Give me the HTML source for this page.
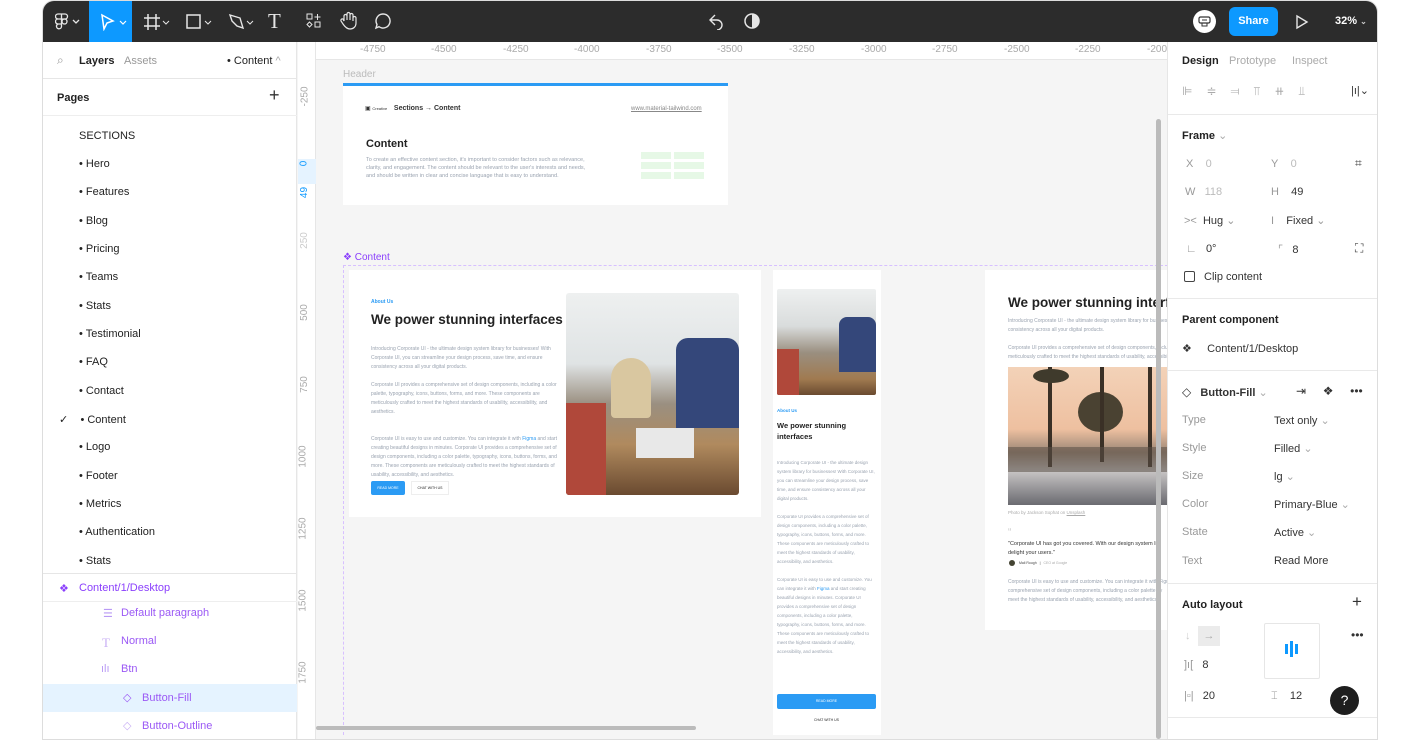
<!DOCTYPE html>
<html><head><meta charset="utf-8"><style>
*{margin:0;padding:0;box-sizing:border-box}
body{width:1419px;height:729px;background:#fff;font-family:"Liberation Sans",sans-serif;position:relative;overflow:hidden;color:#222}
.a{position:absolute}
.win{left:42px;top:0;width:1336px;height:740px;border-radius:12px 12px 0 0;overflow:hidden;background:#f5f5f5;border:1px solid #ddd}
.tb{left:0;top:0;width:1336px;height:41px;background:#2c2c2c}
.ic{color:#e6e6e6;font-size:18px}
.lp{left:0;top:41px;width:254px;height:700px;background:#fff;border-right:1px solid #e6e6e6}
.rp{left:1124px;top:41px;width:212px;height:700px;background:#fff;border-left:1px solid #e6e6e6}
.t12{font-size:11px}
.pg{position:absolute;left:36px;font-size:11px;color:#222}
.lbl{font-size:11px;color:#999}
.val{font-size:11px;color:#333}
.sep{position:absolute;left:0;width:212px;height:1px;background:#e9e9e9}
.rl{font-size:10px;color:#aaa;position:absolute}
.g{color:#9aa3b0;font-size:5px;line-height:9px}
</style></head><body>
<div class="a win">
 <div class="a tb">
  <svg class="a" style="left:12px;top:12px" width="28" height="18"><g fill="none" stroke="#e6e6e6" stroke-width="1.3"><path d="M3 1h3.5v5H3a2.5 2.5 0 010-5zM6.5 1H10a2.5 2.5 0 010 5H6.5zM3 6h3.5v5H3a2.5 2.5 0 010-5zM6.5 11v2.5A2.5 2.5 0 113 11z"/><circle cx="9.5" cy="8.5" r="2.5"/><path d="M18 7l3 3 3-3"/></g></svg>
  <div class="a" style="left:46px;top:0;width:43px;height:41px;background:#0d99ff"></div>
  <svg class="a" style="left:56px;top:12px" width="30" height="18"><path d="M3 2 L14 8 L8 10 L5 16 Z" fill="none" stroke="#fff" stroke-width="1.5"/><path d="M21 8 l3 3 3-3" fill="none" stroke="#fff" stroke-width="1.2"/></svg>
  <svg class="a" style="left:100px;top:11px" width="30" height="20"><path d="M5 2v16M13 2v16M1 6h16M1 14h16" stroke="#e6e6e6" stroke-width="1.5"/><path d="M20 9l3 3 3-3" fill="none" stroke="#e6e6e6"/></svg>
  <svg class="a" style="left:142px;top:11px" width="30" height="20"><rect x="2" y="3" width="13" height="13" fill="none" stroke="#e6e6e6" stroke-width="1.5"/><path d="M20 9l3 3 3-3" fill="none" stroke="#e6e6e6"/></svg>
  <svg class="a" style="left:184px;top:11px" width="30" height="20"><path d="M3 3l10 3 3 10-6-2-5-5z" fill="none" stroke="#e6e6e6" stroke-width="1.4"/><path d="M20 9l3 3 3-3" fill="none" stroke="#e6e6e6"/></svg>
  <div class="a ic" style="left:225px;top:8px;font-family:'Liberation Serif',serif;font-size:21px">T</div>
  <svg class="a" style="left:262px;top:11px" width="18" height="18"><rect x="2" y="2" width="5" height="5" fill="none" stroke="#e6e6e6"/><rect x="10" y="10" width="5" height="5" fill="none" stroke="#e6e6e6"/><path d="M4.5 10l2.5 2.5-2.5 2.5-2.5-2.5z M12.5 2v6M9.5 5h6" fill="none" stroke="#e6e6e6"/></svg>
  <svg class="a" style="left:296px;top:10px" width="20" height="20"><path d="M5 10V5a1.5 1.5 0 013 0v4V3a1.5 1.5 0 013 0v6V4a1.5 1.5 0 013 0v6-3a1.5 1.5 0 013 0v5c0 4-3 6-6 6s-5-2-7-5l-2-3a1.5 1.5 0 012-2z" fill="none" stroke="#e6e6e6" stroke-width="1.2"/></svg>
  <svg class="a" style="left:331px;top:11px" width="18" height="18"><path d="M9 2a7 7 0 11-4 12.7L2 16l1-3.5A7 7 0 019 2z" fill="none" stroke="#e6e6e6" stroke-width="1.4"/></svg>
  <svg class="a" style="left:664px;top:11px" width="18" height="18"><path d="M8 3L3 8l5 5M3 8h7a5 5 0 010 10" fill="none" stroke="#e6e6e6" stroke-width="1.4"/></svg>
  <svg class="a" style="left:700px;top:11px" width="18" height="18"><circle cx="9" cy="9" r="7" fill="none" stroke="#e6e6e6" stroke-width="1.5"/><path d="M9 2a7 7 0 010 14z" fill="#e6e6e6"/></svg>
  <div class="a" style="left:1150px;top:9px;width:23px;height:23px;border-radius:50%;background:#fff"></div>
  <svg class="a" style="left:1154px;top:13px" width="15" height="15"><rect x="2" y="3" width="11" height="6" rx="1.5" fill="none" stroke="#333" stroke-width="1.2"/><path d="M5 9v3h5V9M5 6h5" fill="none" stroke="#333"/></svg>
  <div class="a" style="left:1186px;top:6px;width:49px;height:29px;border-radius:6px;background:#0d99ff;color:#fff;font-size:11px;font-weight:bold;text-align:center;line-height:29px">Share</div>
  <svg class="a" style="left:1252px;top:13px" width="14" height="16"><path d="M2 2l10 6-10 6z" fill="none" stroke="#e6e6e6" stroke-width="1.4"/></svg>
  <div class="a" style="left:1292px;top:14px;color:#fff;font-size:11px;font-weight:bold">32% <span style="font-size:8px;color:#ccc">⌄</span></div>
 </div>
 <div class="a lp">
  <div class="a" style="left:14px;top:11px;color:#999;font-size:12px">⌕</div>
  <div class="a t12" style="left:36px;top:13px;font-weight:bold">Layers</div>
  <div class="a t12" style="left:81px;top:13px;color:#999">Assets</div>
  <div class="a t12" style="left:184px;top:13px">• Content <span style="color:#aaa">^</span></div>
  <div class="a" style="left:0;top:36px;width:254px;height:1px;background:#e6e6e6"></div>
  <div class="a t12" style="left:14px;top:50px;font-weight:bold">Pages</div>
  <div class="a" style="left:226px;top:43px;font-size:18px;color:#333">+</div>
  <div class="a" style="left:0;top:73px;width:254px;height:1px;background:#eee"></div>
  <div class="pg" style="top:88px">SECTIONS</div>
  <div class="pg" style="top:116px">• Hero</div>
  <div class="pg" style="top:144px">• Features</div>
  <div class="pg" style="top:173px">• Blog</div>
  <div class="pg" style="top:201px">• Pricing</div>
  <div class="pg" style="top:229px">• Teams</div>
  <div class="pg" style="top:258px">• Stats</div>
  <div class="pg" style="top:286px">• Testimonial</div>
  <div class="pg" style="top:314px">• FAQ</div>
  <div class="pg" style="top:343px">• Contact</div>
  <div class="pg" style="top:371px;left:16px">✓&nbsp;&nbsp;&nbsp;&nbsp;• Content</div>
  <div class="pg" style="top:399px">• Logo</div>
  <div class="pg" style="top:428px">• Footer</div>
  <div class="pg" style="top:456px">• Metrics</div>
  <div class="pg" style="top:484px">• Authentication</div>
  <div class="pg" style="top:513px">• Stats</div>
  <div class="a" style="left:0;top:531px;width:254px;height:1px;background:#e6e6e6"></div>
  <div class="a t12" style="left:16px;top:540px;color:#8a3ffc;font-size:11px">❖</div>
  <div class="a t12" style="left:36px;top:540px;color:#8a3ffc">Content/1/Desktop</div>
  <div class="a" style="left:0;top:559px;width:254px;height:1px;background:#eee"></div>
  <div class="a t12" style="left:60px;top:565px;color:#b99af5">☰</div>
  <div class="a t12" style="left:78px;top:565px;color:#9b59f5">Default paragraph</div>
  <div class="a t12" style="left:59px;top:593px;color:#c9b0f5;font-family:'Liberation Serif',serif;font-size:13px">T</div>
  <div class="a t12" style="left:78px;top:593px;color:#9b59f5">Normal</div>
  <div class="a t12" style="left:58px;top:621px;color:#b99af5">ılı</div>
  <div class="a t12" style="left:78px;top:621px;color:#9b59f5">Btn</div>
  <div class="a" style="left:0;top:642px;width:254px;height:28px;background:#e5f3ff"></div>
  <div class="a t12" style="left:80px;top:649px;color:#9b59f5">◇</div>
  <div class="a t12" style="left:99px;top:650px;color:#9b59f5">Button-Fill</div>
  <div class="a t12" style="left:80px;top:677px;color:#c9b0f5">◇</div>
  <div class="a t12" style="left:99px;top:678px;color:#9b59f5">Button-Outline</div>
 </div>
 <!-- rulers -->
 <div class="a" style="left:255px;top:41px;width:869px;height:18px;background:#fff;border-bottom:1px solid #e6e6e6"></div>
 <div class="a" style="left:255px;top:41px;width:18px;height:700px;background:#fff;border-right:1px solid #e6e6e6"></div>
 <div class="rl" style="left:317px;top:43px">-4750</div><div class="rl" style="left:388px;top:43px">-4500</div><div class="rl" style="left:460px;top:43px">-4250</div><div class="rl" style="left:531px;top:43px">-4000</div><div class="rl" style="left:603px;top:43px">-3750</div><div class="rl" style="left:674px;top:43px">-3500</div><div class="rl" style="left:746px;top:43px">-3250</div><div class="rl" style="left:818px;top:43px">-3000</div><div class="rl" style="left:889px;top:43px">-2750</div><div class="rl" style="left:961px;top:43px">-2500</div><div class="rl" style="left:1032px;top:43px">-2250</div><div class="rl" style="left:1104px;top:43px">-200</div>
 <div class="a" style="left:255px;top:158px;width:18px;height:25px;background:#e5f3ff"></div>
 <div class="rl" style="left:252px;top:90px;transform:rotate(-90deg)">-250</div>
 <div class="rl" style="left:258px;top:157px;transform:rotate(-90deg);color:#0d99ff">0</div>
 <div class="rl" style="left:256px;top:186px;transform:rotate(-90deg);color:#0d99ff">49</div>
 <div class="rl" style="left:253px;top:234px;transform:rotate(-90deg);color:#ccc">250</div>
 <div class="rl" style="left:253px;top:306px;transform:rotate(-90deg)">500</div>
 <div class="rl" style="left:253px;top:378px;transform:rotate(-90deg)">750</div>
 <div class="rl" style="left:249px;top:450px;transform:rotate(-90deg)">1000</div>
 <div class="rl" style="left:249px;top:522px;transform:rotate(-90deg)">1250</div>
 <div class="rl" style="left:249px;top:594px;transform:rotate(-90deg)">1500</div>
 <div class="rl" style="left:249px;top:666px;transform:rotate(-90deg)">1750</div>
 <!-- canvas -->
 <div class="a" style="left:300px;top:68px;font-size:10px;color:#bbb">Header</div>
 <div class="a" style="left:300px;top:82px;width:385px;height:3px;background:#2b9bf4"></div>
 <div class="a" style="left:300px;top:85px;width:385px;height:119px;background:#fff">
  <div class="a" style="left:22px;top:19px;font-size:6px;color:#333">▣ <span style="font-size:4px">Creative</span>&nbsp;&nbsp;&nbsp; <b style="font-size:7px">Sections → Content</b></div>
  <div class="a" style="left:288px;top:20px;font-size:6px;color:#888;text-decoration:underline">www.material-tailwind.com</div>
  <div class="a" style="left:23px;top:52px;font-size:11px;font-weight:bold">Content</div>
  <div class="a g" style="left:23px;top:70px;width:225px;font-size:5.5px;line-height:8px">To create an effective content section, it's important to consider factors such as relevance, clarity, and engagement. The content should be relevant to the user's interests and needs, and should be written in clear and concise language that is easy to understand.</div>
  <div class="a" style="left:298px;top:66px;width:30px;height:7px;background:#e6f8e6"></div><div class="a" style="left:331px;top:66px;width:30px;height:7px;background:#e6f8e6"></div>
  <div class="a" style="left:298px;top:76px;width:30px;height:7px;background:#e6f8e6"></div><div class="a" style="left:331px;top:76px;width:30px;height:7px;background:#e6f8e6"></div>
  <div class="a" style="left:298px;top:86px;width:30px;height:7px;background:#e6f8e6"></div><div class="a" style="left:331px;top:86px;width:30px;height:7px;background:#e6f8e6"></div>
 </div>
 <div class="a" style="left:300px;top:251px;font-size:10px;color:#8a3ffc">❖ Content</div>
 <div class="a" style="left:300px;top:264px;width:830px;height:470px;border:1px dashed #d7c0ff;border-right:none;border-bottom:none"></div>
 <div class="a" style="left:306px;top:269px;width:412px;height:247px;background:#fff">
  <div class="a" style="left:22px;top:29px;font-size:5px;color:#2b9bf4;font-weight:bold">About Us</div>
  <div class="a" style="left:22px;top:42px;font-size:13.5px;font-weight:bold;color:#222">We power stunning interfaces</div>
  <div class="a g" style="left:22px;top:75px;width:190px">Introducing Corporate UI - the ultimate design system library for businesses! With Corporate UI, you can streamline your design process, save time, and ensure consistency across all your digital products.<br><br style="line-height:4px">Corporate UI provides a comprehensive set of design components, including a color palette, typography, icons, buttons, forms, and more. These components are meticulously crafted to meet the highest standards of usability, accessibility, and aesthetics.<br><br><br>Corporate UI is easy to use and customize. You can integrate it with <span style="color:#2b9bf4">Figma</span> and start creating beautiful designs in minutes. Corporate UI provides a comprehensive set of design components, including a color palette, typography, icons, buttons, forms, and more. These components are meticulously crafted to meet the highest standards of usability, accessibility, and aesthetics.</div>
  <div class="a" style="left:22px;top:211px;width:34px;height:14px;background:#2b9bf4;border-radius:2px;color:#fff;font-size:3.5px;text-align:center;line-height:14px">READ MORE</div>
  <div class="a" style="left:62px;top:211px;width:38px;height:14px;background:#fff;border:1px solid #eee;font-size:3.5px;text-align:center;line-height:12px">CHAT WITH US</div>
  <div class="a" style="left:217px;top:23px;width:173px;height:202px;border-radius:3px;overflow:hidden;background:linear-gradient(180deg,#eef0f0 0%,#dfe3e4 35%,#9a8f80 55%,#b08a5e 75%,#6a4a30 100%)">
   <div class="a" style="left:0;top:110px;width:40px;height:92px;background:#b0483a"></div>
   <div class="a" style="left:110px;top:45px;width:63px;height:90px;background:#34477a;border-radius:12px 12px 0 0"></div>
   <div class="a" style="left:45px;top:65px;width:40px;height:60px;background:#d9c7a0;border-radius:20px 20px 4px 4px"></div>
   <div class="a" style="left:70px;top:135px;width:58px;height:30px;background:#e8e8e8"></div>
  </div>
 </div>
 <div class="a" style="left:730px;top:269px;width:108px;height:465px;background:#fff">
  <div class="a" style="left:4px;top:19px;width:99px;height:106px;border-radius:2px;overflow:hidden;background:linear-gradient(180deg,#eef0f0 0%,#d9dcdc 35%,#9a8f80 60%,#a07a50 85%,#6a4a30 100%)">
   <div class="a" style="left:0;top:60px;width:22px;height:46px;background:#b0483a"></div>
   <div class="a" style="left:62px;top:28px;width:37px;height:55px;background:#34477a;border-radius:8px 8px 0 0"></div>
  </div>
  <div class="a" style="left:4px;top:138px;font-size:4.5px;color:#2b9bf4;font-weight:bold">About Us</div>
  <div class="a" style="left:4px;top:150px;font-size:7.5px;font-weight:bold;line-height:11px">We power stunning<br>interfaces</div>
  <div class="a g" style="left:4px;top:188px;width:98px;font-size:4.5px">Introducing Corporate UI - the ultimate design system library for businesses! With Corporate UI, you can streamline your design process, save time, and ensure consistency across all your digital products.<br><br style="line-height:4px">Corporate UI provides a comprehensive set of design components, including a color palette, typography, icons, buttons, forms, and more. These components are meticulously crafted to meet the highest standards of usability, accessibility, and aesthetics.<br><br>Corporate UI is easy to use and customize. You can integrate it with <span style="color:#2b9bf4">Figma</span> and start creating beautiful designs in minutes. Corporate UI provides a comprehensive set of design components, including a color palette, typography, icons, buttons, forms, and more. These components are meticulously crafted to meet the highest standards of usability, accessibility, and aesthetics.</div>
  <div class="a" style="left:4px;top:424px;width:99px;height:15px;background:#2b9bf4;border-radius:2px;color:#fff;font-size:3.5px;text-align:center;line-height:15px">READ MORE</div>
  <div class="a" style="left:4px;top:444px;width:99px;height:13px;font-size:3.5px;text-align:center;line-height:13px">CHAT WITH US</div>
 </div>
 <div class="a" style="left:942px;top:269px;width:182px;height:360px;background:#fff;overflow:hidden">
  <div class="a" style="left:23px;top:25px;font-size:13.5px;font-weight:bold;white-space:nowrap">We power stunning interfaces</div>
  <div class="a g" style="left:23px;top:47px;width:230px;font-size:5px">Introducing Corporate UI - the ultimate design system library for businesses! With Corporate UI<br>consistency across all your digital products.<br><br style="line-height:3px">Corporate UI provides a comprehensive set of design components, including a color palette<br>meticulously crafted to meet the highest standards of usability, accessibility, and aesthetics.</div>
  <div class="a" style="left:23px;top:97px;width:160px;height:138px;overflow:hidden;background:linear-gradient(180deg,#f3d2b8 0%,#eec0a0 45%,#9a8676 62%,#c9c6c6 75%,#6a6a70 100%)">
   <div class="a" style="left:40px;top:0;width:4px;height:100px;background:#3a3026"></div>
   <div class="a" style="left:25px;top:2px;width:36px;height:14px;background:#3f3a2c;border-radius:50%"></div>
   <div class="a" style="left:70px;top:25px;width:45px;height:40px;background:#4a4232;border-radius:50%"></div>
   <div class="a" style="left:92px;top:0;width:4px;height:95px;background:#3a3026"></div>
   <div class="a" style="left:140px;top:0;width:4px;height:100px;background:#3a3026"></div>
   <div class="a" style="left:0;top:80px;width:160px;height:25px;background:#5a4e46;opacity:.55"></div>
  </div>
  <div class="a" style="left:23px;top:240px;font-size:4.5px;color:#aaa">Photo by Jackson Sophat on <u>Unsplash</u></div>
  <div class="a" style="left:23px;top:257px;font-size:10px;color:#ccc">“</div>
  <div class="a" style="left:23px;top:270px;font-size:5.5px;color:#333;width:200px;line-height:9px">"Corporate UI has got you covered. With our design system lib<br>delight your users."</div>
  <div class="a" style="left:24px;top:290px;width:6px;height:6px;border-radius:50%;background:#443"></div>
  <div class="a" style="left:34px;top:291px;font-size:3.5px;color:#444">Mali Rough &nbsp;&nbsp;|&nbsp;&nbsp; <span style="color:#aaa">CEO at Google</span></div>
  <div class="a g" style="left:23px;top:308px;width:230px;font-size:5px">Corporate UI is easy to use and customize. You can integrate it with Figma<br>comprehensive set of design components, including a color palette, ty<br>meet the highest standards of usability, accessibility, and aesthetics.</div>
 </div>
 <div class="a" style="left:1113px;top:118px;width:5px;height:620px;background:#bbb;border-radius:3px"></div>
 <div class="a" style="left:273px;top:725px;width:380px;height:4px;background:#bbb;border-radius:2px"></div>
 <!-- right panel -->
 <div class="a rp">
  <div class="a t12" style="left:14px;top:13px;font-weight:bold">Design</div>
  <div class="a t12" style="left:61px;top:13px;color:#aaa">Prototype</div>
  <div class="a t12" style="left:124px;top:13px;color:#aaa">Inspect</div>
  <div class="a" style="left:14px;top:42px;color:#aaa;font-size:12px;letter-spacing:14px;white-space:nowrap">⊫≑⫤⫪⧺⫫</div>
  <div class="a" style="left:183px;top:42px;color:#333;font-size:11px">|ı|⌄</div>
  <div class="sep" style="top:72px"></div>
  <div class="a t12" style="left:14px;top:87px;font-weight:bold">Frame <span style="color:#aaa;font-weight:normal">⌄</span></div>
  <div class="a lbl" style="left:18px;top:116px">X&nbsp;&nbsp;&nbsp; <span style="color:#bbb">0</span></div>
  <div class="a lbl" style="left:103px;top:116px">Y&nbsp;&nbsp;&nbsp; <span style="color:#bbb">0</span></div>
  <div class="a lbl" style="left:187px;top:114px;color:#444;font-size:12px">⌗</div>
  <div class="a lbl" style="left:17px;top:144px">W&nbsp;&nbsp; <span style="color:#bbb">118</span></div>
  <div class="a lbl" style="left:103px;top:144px">H&nbsp;&nbsp;&nbsp; <span style="color:#333">49</span></div>
  <div class="a lbl" style="left:16px;top:172px">&gt;&lt;&nbsp; <span style="color:#333">Hug</span> ⌄</div>
  <div class="a lbl" style="left:103px;top:172px">I&nbsp;&nbsp;&nbsp; <span style="color:#333">Fixed</span> ⌄</div>
  <div class="a lbl" style="left:18px;top:201px">∟&nbsp;&nbsp; <span style="color:#333">0°</span></div>
  <div class="a lbl" style="left:110px;top:201px">⌜&nbsp;&nbsp; <span style="color:#333">8</span></div>
  <div class="a lbl" style="left:187px;top:199px;color:#444;font-size:12px">⛶</div>
  <div class="a" style="left:16px;top:229px;width:11px;height:11px;border:1px solid #444;border-radius:2px"></div>
  <div class="a val" style="left:36px;top:229px">Clip content</div>
  <div class="sep" style="top:256px"></div>
  <div class="a t12" style="left:14px;top:272px;font-weight:bold">Parent component</div>
  <div class="a val" style="left:14px;top:300px">❖&nbsp;&nbsp;&nbsp;&nbsp; Content/1/Desktop</div>
  <div class="sep" style="top:328px"></div>
  <div class="a val" style="left:14px;top:343px"><span style="font-size:12px">◇</span>&nbsp;&nbsp; <b>Button-Fill</b> <span style="color:#aaa">⌄</span></div>
  <div class="a val" style="left:128px;top:342px;font-size:12px">⇥&nbsp;&nbsp;&nbsp;&nbsp; ❖&nbsp;&nbsp;&nbsp;&nbsp; •••</div>
  <div class="a lbl" style="left:14px;top:372px">Type</div><div class="a val" style="left:106px;top:372px">Text only <span style="color:#aaa">⌄</span></div>
  <div class="a lbl" style="left:14px;top:400px">Style</div><div class="a val" style="left:106px;top:400px">Filled <span style="color:#aaa">⌄</span></div>
  <div class="a lbl" style="left:14px;top:428px">Size</div><div class="a val" style="left:106px;top:428px">lg <span style="color:#aaa">⌄</span></div>
  <div class="a lbl" style="left:14px;top:456px">Color</div><div class="a val" style="left:106px;top:456px">Primary-Blue <span style="color:#aaa">⌄</span></div>
  <div class="a lbl" style="left:14px;top:484px">State</div><div class="a val" style="left:106px;top:484px">Active <span style="color:#aaa">⌄</span></div>
  <div class="a lbl" style="left:14px;top:513px">Text</div><div class="a val" style="left:106px;top:513px">Read More</div>
  <div class="sep" style="top:541px"></div>
  <div class="a t12" style="left:14px;top:557px;font-weight:bold">Auto layout</div>
  <div class="a" style="left:184px;top:550px;font-size:17px;color:#333">+</div>
  <div class="a lbl" style="left:17px;top:588px;color:#ccc">↓</div>
  <div class="a" style="left:30px;top:584px;width:22px;height:20px;background:#ebebeb;color:#aaa;font-size:11px;text-align:center;line-height:20px">→</div>
  <div class="a" style="left:96px;top:581px;width:56px;height:56px;border:1px solid #e6e6e6;border-radius:2px"></div>
  <div class="a" style="left:117px;top:602px;width:3px;height:10px;background:#0d99ff"></div>
  <div class="a" style="left:122px;top:599px;width:3px;height:16px;background:#0d99ff"></div>
  <div class="a" style="left:127px;top:602px;width:3px;height:10px;background:#0d99ff"></div>
  <div class="a val" style="left:183px;top:586px;font-size:12px">•••</div>
  <div class="a lbl" style="left:16px;top:617px">]ı[&nbsp;&nbsp; <span style="color:#333">8</span></div>
  <div class="a lbl" style="left:16px;top:648px">|▫|&nbsp;&nbsp; <span style="color:#333">20</span></div>
  <div class="a lbl" style="left:103px;top:648px">⌶&nbsp;&nbsp;&nbsp; <span style="color:#333">12</span></div>
  <div class="sep" style="top:675px"></div>
  <div class="a" style="left:162px;top:644px;width:29px;height:29px;border-radius:50%;background:#1e1e1e;color:#fff;font-size:14px;text-align:center;line-height:29px">?</div>
 </div>
</div>
</body></html>
